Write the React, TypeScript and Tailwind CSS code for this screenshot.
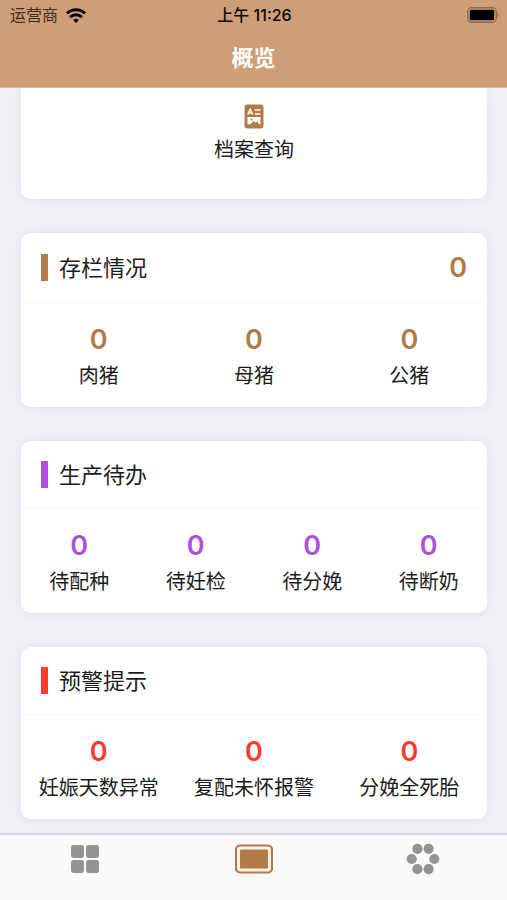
import React from "react";

type Stat = { label: string; value: number };
type Tone = "brown" | "purple" | "red";

const textTone: Record<Tone, string> = {
  brown: "text-[#b17a48]",
  purple: "text-[#ad51db]",
  red: "text-[#fc3a30]",
};

const barTone: Record<Tone, string> = {
  brown: "bg-[#b17a48]",
  purple: "bg-[#ad51db]",
  red: "bg-[#fc3a30]",
};

function WifiIcon() {
  return (
    <svg viewBox="0 0 20 15" className="h-[15px] w-5" fill="none" stroke="#0b0704" strokeWidth="3" aria-hidden="true">
      <path d="M1 5.4a12.8 12.8 0 0 1 18 0" />
      <path d="M4.2 9.2a8.2 8.2 0 0 1 11.6 0" />
      <path d="M10 15 7.1 12.1a4.1 4.1 0 0 1 5.8 0Z" fill="#0b0704" stroke="none" />
    </svg>
  );
}

function BatteryIcon() {
  return (
    <svg viewBox="0 0 34 16" className="h-4 w-[34px]" aria-hidden="true">
      <rect x="2.75" y="0.75" width="28.5" height="14.5" rx="4" fill="none" stroke="#8b6a50" strokeWidth="1.3" />
      <rect x="4.8" y="2.8" width="24.4" height="10.4" rx="1.5" fill="#000" />
      <path d="M32.4 5.8c1.6.6 1.6 3.8 0 4.4Z" fill="#8b6a50" />
    </svg>
  );
}

function ArchiveIcon() {
  return (
    <svg viewBox="0 0 20 25" className="h-[25px] w-5" aria-hidden="true">
      <rect x="0.5" y="0.5" width="19" height="24" rx="3" fill="#b17a48" />
      <g fill="none" stroke="#fff" strokeWidth="1.4">
        <path d="M3.7 10.6 6.2 5.2l2.5 5.4M4.6 9h3.2M10.8 6h5.6M10.8 10h5.6" />
      </g>
      <path d="M3.5 13h13v7.3h-1.4l-1.8-3-1.6 1.5-2-1.7-3.2 3.2h-3Z" fill="#fff" />
      <circle cx="7.6" cy="15.6" r="1" fill="#b17a48" />
    </svg>
  );
}

function GridIcon() {
  return (
    <svg viewBox="0 0 30 30" className="size-[30px]" fill="#949496" aria-hidden="true">
      <rect x="1" y="1" width="13" height="13" rx="2.4" />
      <rect x="16" y="1" width="13" height="13" rx="2.4" />
      <rect x="1" y="16" width="13" height="13" rx="2.4" />
      <rect x="16" y="16" width="13" height="13" rx="2.4" />
    </svg>
  );
}

function ScreenIcon() {
  return (
    <svg viewBox="0 0 38 30" className="h-[30px] w-[38px]" aria-hidden="true">
      <rect x="1" y="1.5" width="36" height="27" rx="4" fill="#fff5ea" stroke="#b17a48" strokeWidth="2.2" />
      <rect x="5" y="5.5" width="28" height="19" rx="1" fill="#b17a48" />
    </svg>
  );
}

function DotsIcon() {
  return (
    <svg viewBox="0 0 34 32" className="h-8 w-[34px]" fill="#949496" aria-hidden="true">
      <circle cx="11.4" cy="5.8" r="5.1" />
      <circle cx="22.6" cy="5.8" r="5.1" />
      <circle cx="5.7" cy="16" r="5.1" />
      <circle cx="28.3" cy="16" r="5.1" />
      <circle cx="11.4" cy="26.2" r="5.1" />
      <circle cx="22.6" cy="26.2" r="5.1" />
    </svg>
  );
}

function StatCard({ title, tone, stats, total, columns }: {
  title: string;
  tone: Tone;
  stats: Stat[];
  total?: number;
  columns: string;
}) {
  const hasTotal = total !== undefined;
  return (
    <section className="rounded-[10px] bg-white shadow-[0_0_12px_rgba(0,0,0,0.06)]">
      <header className={`flex items-center border-b border-[#f9f9f9] px-5 ${hasTotal ? "h-[70px]" : "h-[68px]"}`}>
        <span className={`h-[27px] w-[7px] ${barTone[tone]}`} />
        <h2 className="ml-[11px] text-[22px] leading-8">{title}</h2>
        {hasTotal && (
          <span className={`ml-auto text-[27px] leading-8 font-semibold ${textTone[tone]}`}>{total}</span>
        )}
      </header>
      <dl className={`grid pt-[21px] pb-[15px] ${columns}`}>
        {stats.map((s) => (
          <div key={s.label} className="flex flex-col-reverse items-center gap-1">
            <dt className="text-xl leading-8 whitespace-nowrap">{s.label}</dt>
            <dd className={`text-[27px] leading-8 font-semibold ${textTone[tone]}`}>{s.value}</dd>
          </div>
        ))}
      </dl>
    </section>
  );
}

export default function App() {
  return (
    <div className="flex h-screen flex-col bg-[#f0eff4] font-[Inter,'Noto_Sans_CJK_SC',sans-serif] text-[#1c1c1c]">
      <header className="border-b border-[#dcb598] bg-[#ce9e79]">
        <div className="grid h-[30px] grid-cols-3 items-center pr-2 pl-[10px] text-base text-[#0b0704]">
          <div className="flex items-center gap-2">
            <span className="text-[#3e2f24]">运营商</span>
            <WifiIcon />
          </div>
          <time className="text-center font-medium whitespace-nowrap">上午 11:26</time>
          <div className="flex justify-end">
            <BatteryIcon />
          </div>
        </div>
        <h1 className="h-[57px] text-center text-[22px] leading-[57px] font-bold text-white">概览</h1>
      </header>

      <main className="flex min-h-0 flex-1 flex-col gap-[34px] overflow-hidden pr-5 pl-[21px]">
        <button
          type="button"
          className="flex flex-col items-center gap-[5px] rounded-b-[10px] bg-white pt-4 pb-[33px] shadow-[0_0_12px_rgba(0,0,0,0.06)]"
        >
          <ArchiveIcon />
          <span className="text-xl leading-8">档案查询</span>
        </button>
        <StatCard
          title="存栏情况"
          tone="brown"
          total={0}
          columns="grid-cols-3"
          stats={[
            { label: "肉猪", value: 0 },
            { label: "母猪", value: 0 },
            { label: "公猪", value: 0 },
          ]}
        />
        <StatCard
          title="生产待办"
          tone="purple"
          columns="grid-cols-4"
          stats={[
            { label: "待配种", value: 0 },
            { label: "待妊检", value: 0 },
            { label: "待分娩", value: 0 },
            { label: "待断奶", value: 0 },
          ]}
        />
        <StatCard
          title="预警提示"
          tone="red"
          columns="grid-cols-3"
          stats={[
            { label: "妊娠天数异常", value: 0 },
            { label: "复配未怀报警", value: 0 },
            { label: "分娩全死胎", value: 0 },
          ]}
        />
      </main>

      <nav className="grid h-[67px] grid-cols-3 items-start border-t-2 border-[#d9d9dc] bg-[#fafafc]">
        <button type="button" aria-label="应用" className="flex h-12 items-center justify-center">
          <GridIcon />
        </button>
        <button type="button" aria-label="概览" aria-current="page" className="flex h-12 items-center justify-center">
          <ScreenIcon />
        </button>
        <button type="button" aria-label="更多" className="flex h-12 items-center justify-center">
          <DotsIcon />
        </button>
      </nav>
    </div>
  );
}
